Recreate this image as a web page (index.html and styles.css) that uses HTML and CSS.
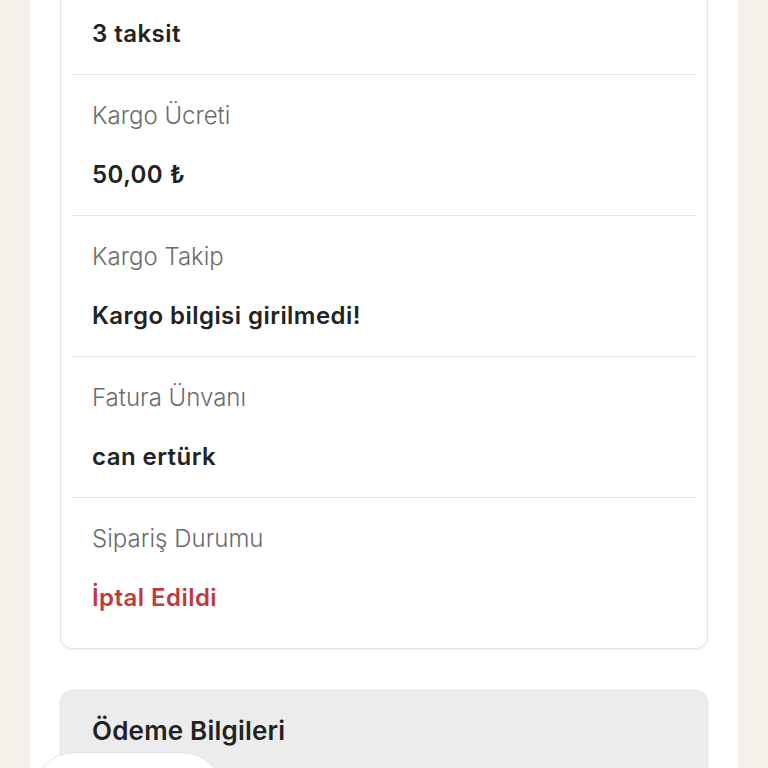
FILE: index.html
```html
<!DOCTYPE html>
<html lang="tr">
<head>
  <meta charset="UTF-8" />
  <title>Sipariş Detayı</title>
  <meta name="viewport" content="width=device-width, initial-scale=1" />
  <link rel="stylesheet" href="styles.css">
</head>
<body>

  <div class="page">

    <!-- SIPARIS BILGILERI -->
    <div class="card">
      <div class="row">
        <div class="label">Taksit Seçeneği</div>
        <div class="value">3 taksit</div>
      </div>
      <div class="row">
        <div class="label">Kargo Ücreti</div>
        <div class="value">50,00 ₺</div>
      </div>
      <div class="row">
        <div class="label">Kargo Takip</div>
        <div class="value">Kargo bilgisi girilmedi!</div>
      </div>
      <div class="row">
        <div class="label">Fatura Ünvanı</div>
        <div class="value">can ertürk</div>
      </div>
      <div class="row last">
        <div class="label">Sipariş Durumu</div>
        <div class="value cancelled">İptal Edildi</div>
      </div>
    </div>

    <!-- ODEME BILGILERI -->
    <div class="card">
      <div class="card-header">Ödeme Bilgileri</div>
    </div>

  </div>

  <!-- floating chat button -->
  <div class="fab"></div>

</body>
</html>
```

FILE: styles.css
```css
body {
  margin: 0;
  background-color: #f6f2eb;
  font-family: Inter, "Noto Sans", sans-serif;
  color: #222;
  overflow: hidden;
}

.page {
  max-width: 648px;
  margin: -67px auto 0;
  padding: 0 30px 40px;
  background-color: #fff;
}

.card {
  background-color: #fff;
  border: 1px solid #e2e2e2;
  border-radius: 12px;
  padding: 0 11px 10px;
  margin-bottom: 41px;
  box-shadow: 0 1px 3px rgba(0, 0, 0, 0.06);
  overflow: hidden;
}

.card-header {
  background-color: #ececec;
  margin: 0 -11px -10px;
  padding: 22px 31px 40px;
  font-size: 26px;
  font-weight: 600;
  line-height: 36px;
  letter-spacing: 0.2px;
  color: #222;
}

.row {
  padding: 23px 20px 22px;
  border-bottom: 1px solid #e6e6e6;
}

.row.last {
  border-bottom: none;
}

.label {
  font-size: 24px;
  line-height: 36px;
  font-weight: 300;
  color: #6b6b6b;
  margin-bottom: 23px;
}

.value {
  font-size: 24px;
  line-height: 36px;
  font-weight: 600;
  letter-spacing: 0.45px;
  color: #222;
}

.value.cancelled {
  color: #c0393b;
}

.fab {
  position: fixed;
  left: 32px;
  bottom: -72px;
  width: 190px;
  height: 86px;
  border-radius: 43px;
  background-color: #fff;
  border: 1px solid #dfe2ea;
}
```
